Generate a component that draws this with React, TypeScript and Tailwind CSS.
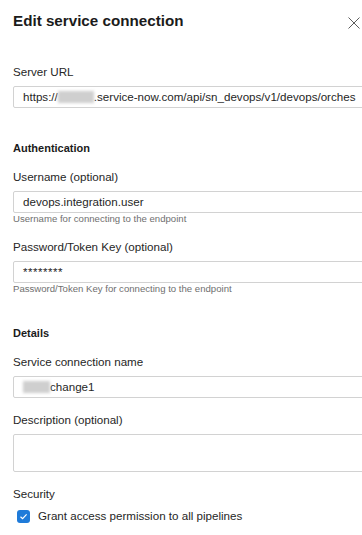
import React from "react";

function Blur({ w }: { w: number }) {
  return (
    <span
      className="inline-block h-[12px] bg-[#cfcfcf] blur-[1.5px] align-middle"
      style={{ width: w }}
    />
  );
}

function Label({ children, className = "" }: { children: React.ReactNode; className?: string }) {
  return (
    <div className={`text-[11.6px] leading-[14px] text-[#262626] ${className}`}>{children}</div>
  );
}

function Input({ children, className = "" }: { children?: React.ReactNode; className?: string }) {
  return (
    <div
      className={`mt-[7px] flex h-[22px] w-[420px] items-center whitespace-nowrap rounded-[2px] border border-[#d2d2d2] pl-[9px] text-[11.6px] text-[#262626] ${className}`}
    >
      {children}
    </div>
  );
}

function Help({ children }: { children: React.ReactNode }) {
  return <div className="text-[9.6px] leading-[12px] text-[#6f6f6f]">{children}</div>;
}

export default function App() {
  return (
    <div
      className="relative h-[535px] w-full overflow-hidden bg-white pl-[13px]"
      style={{ fontFamily: '"Liberation Sans", Arial, sans-serif' }}
    >
      <div className="flex items-start justify-between">
        <h1 className="mt-[11px] text-[15.2px] font-bold leading-[20px] text-[#1b1b1b]">
          Edit service connection
        </h1>
        <svg className="mr-[2px] mt-[17px]" width="12" height="12" viewBox="0 0 12 12">
          <path d="M0.5 0.5 L11.5 11.5 M11.5 0.5 L0.5 11.5" stroke="#4a4a4a" strokeWidth="0.9" fill="none" />
        </svg>
      </div>

      <Label className="mt-[34px]">Server URL</Label>
      <Input>
        https://
        <Blur w={36} />
        .service-now.com/api/sn_devops/v1/devops/orches
      </Input>

      <div className="mt-[33px] text-[11px] font-bold leading-[14px] text-[#1b1b1b]">Authentication</div>

      <Label className="mt-[15px]">Username (optional)</Label>
      <Input>devops.integration.user</Input>
      <Help>Username for connecting to the endpoint</Help>

      <Label className="mt-[15px]">Password/Token Key (optional)</Label>
      <Input className="text-[9px] tracking-[0.5px] text-[#555]">********</Input>
      <Help>Password/Token Key for connecting to the endpoint</Help>

      <div className="mt-[31px] text-[11px] font-bold leading-[14px] text-[#1b1b1b]">Details</div>

      <Label className="mt-[15px]">Service connection name</Label>
      <Input className="pl-[7px]">
        <Blur w={27} />
        change1
      </Input>

      <Label className="mt-[15px]">Description (optional)</Label>
      <div className="mt-[7px] h-[38px] w-[420px] rounded-[2px] border border-[#d2d2d2]" />

      <Label className="mt-[15px]">Security</Label>
      <div className="mt-[8px] flex h-[14px] items-center">
        <div className="ml-[4px] flex h-[13px] w-[13px] items-center justify-center rounded-[3px] bg-[#1f7bd9]">
          <svg width="9" height="9" viewBox="0 0 9 9">
            <path d="M1.5 4.8 L3.6 6.7 L7.6 2.3" stroke="white" strokeWidth="1.2" fill="none" />
          </svg>
        </div>
        <span className="ml-[8px] text-[11.6px] leading-[14px] text-[#262626]">
          Grant access permission to all pipelines
        </span>
      </div>
    </div>
  );
}
